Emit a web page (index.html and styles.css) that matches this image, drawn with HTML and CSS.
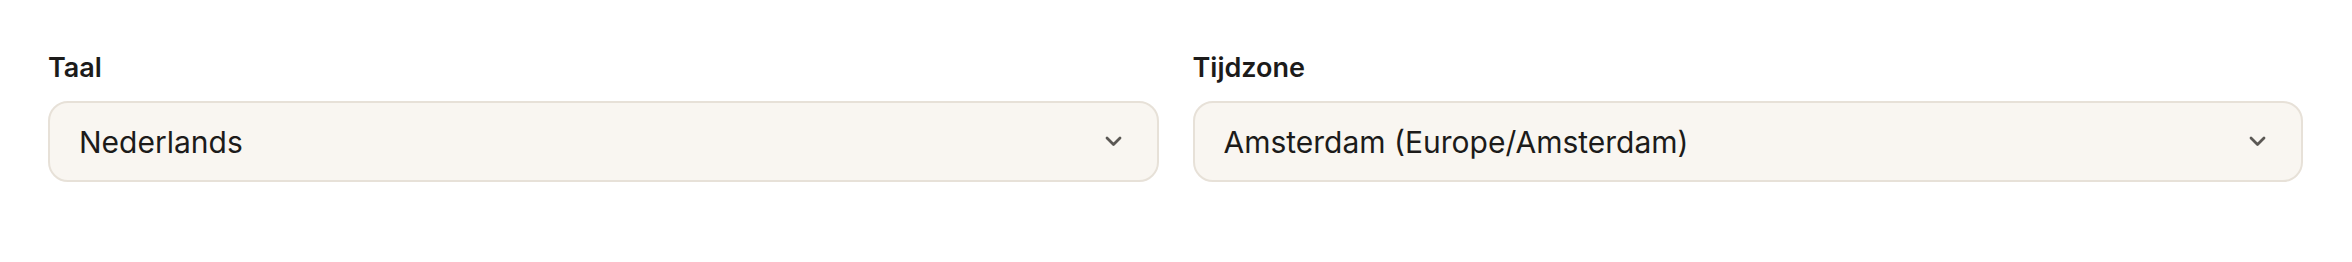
FILE: index.html
```html
<!DOCTYPE html>
<html lang="nl">
<head>
    <meta charset="UTF-8">
    <meta name="viewport" content="width=device-width, initial-scale=1.0">
    <title>Instellingen</title>
    <link rel="stylesheet" href="styles.css">
</head>
<body>
    <div class="settings-row">
        <div class="field">
            <label class="field-label" for="taal">Taal</label>
            <div class="select-box" id="taal">
                <span class="select-value">Nederlands</span>
                <svg class="chevron" width="17" height="11" viewBox="0 0 17 11" fill="none" xmlns="http://www.w3.org/2000/svg">
                    <path d="M2 2L8.5 8.5L15 2" stroke="currentColor" stroke-width="2.8" stroke-linecap="round" stroke-linejoin="round"/>
                </svg>
            </div>
        </div>
        <div class="field">
            <label class="field-label" for="tijdzone">Tijdzone</label>
            <div class="select-box" id="tijdzone">
                <span class="select-value">Amsterdam (Europe/Amsterdam)</span>
                <svg class="chevron" width="17" height="11" viewBox="0 0 17 11" fill="none" xmlns="http://www.w3.org/2000/svg">
                    <path d="M2 2L8.5 8.5L15 2" stroke="currentColor" stroke-width="2.8" stroke-linecap="round" stroke-linejoin="round"/>
                </svg>
            </div>
        </div>
    </div>
</body>
</html>
```

FILE: styles.css
```css
body {
    margin: 0;
    background: #ffffff;
    font-family: Inter, "Noto Sans", sans-serif;
    color: #1c1b1a;
}
.settings-row {
    display: grid;
    grid-template-columns: 1fr 1fr;
    gap: 34px;
    padding: 50px 49px 0 48px;
}
.field {
    display: flex;
    flex-direction: column;
}
.field-label {
    font-size: 27px;
    font-weight: 600;
    line-height: 35px;
    margin-bottom: 16px;
}
.select-box {
    display: flex;
    align-items: center;
    justify-content: space-between;
    height: 77px;
    padding: 0 35px 0 29px;
    background: #f9f6f1;
    border: 2px solid #e7e1d8;
    border-radius: 20px;
}
.select-value {
    font-size: 30px;
}
.chevron {
    color: #5b5854;
}
```
